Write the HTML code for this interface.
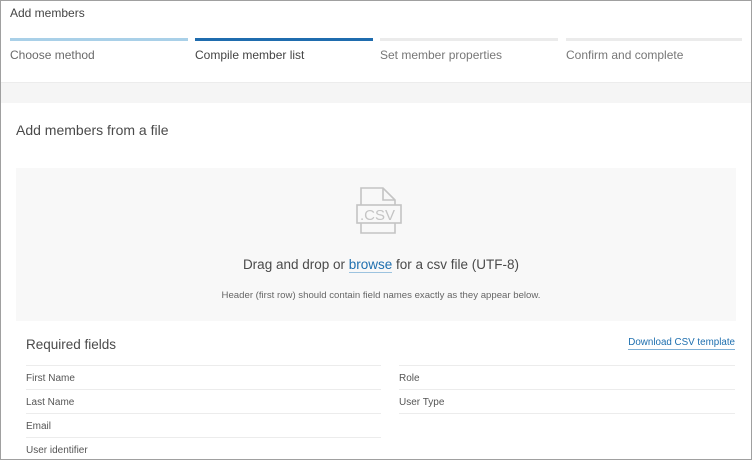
<!DOCTYPE html>
<html><head><style>
body{margin:0;width:752px;height:460px;overflow:hidden;background:#fff;font-family:"Liberation Sans",sans-serif;}
.frame{position:absolute;left:0;top:0;width:750px;height:458px;border:1px solid #a0a0a0;}
.a{position:absolute;white-space:nowrap;}
.bar{position:absolute;top:38px;height:3px;}
.ln{position:absolute;height:1px;background:#ececec;}
.f{position:absolute;font-size:10px;color:#555;}
</style></head><body>
<div class="frame"></div>
<div class="a" style="left:10px;top:6px;font-size:12px;color:#444">Add members</div>
<div class="bar" style="left:10px;width:178px;background:#a9d0e8"></div>
<div class="bar" style="left:195px;width:178px;background:#1f6cae"></div>
<div class="bar" style="left:380px;width:178px;background:#ebebeb"></div>
<div class="bar" style="left:566px;width:176px;background:#ebebeb"></div>
<div class="a" style="left:10px;top:48px;font-size:12px;color:#6a6a6a">Choose method</div>
<div class="a" style="left:195px;top:48px;font-size:12px;color:#444">Compile member list</div>
<div class="a" style="left:380px;top:48px;font-size:12px;color:#777">Set member properties</div>
<div class="a" style="left:566px;top:48px;font-size:12px;color:#777">Confirm and complete</div>
<div class="a" style="left:1px;top:82px;width:750px;height:20px;background:#f5f5f5;border-top:1px solid #ececec"></div>
<div class="a" style="left:16px;top:122px;font-size:14px;color:#4a4a4a">Add members from a file</div>
<div class="a" style="left:16px;top:168px;width:720px;height:153px;background:#f8f8f8"></div>
<svg class="a" style="left:356px;top:186px" width="48" height="50" viewBox="0 0 48 50" fill="none" stroke="#c4c4c4" stroke-width="1.6">
<path d="M5 19V2h22l12 12v5M27 2v12h12M5 37v10h34V37"/>
<rect x="1" y="19" width="44" height="18" fill="#f8f8f8"/>
<text x="4" y="34" font-family="Liberation Sans" font-size="15" fill="#c4c4c4" stroke="none">.CSV</text>
</svg>
<div class="a" style="left:0;width:762px;text-align:center;top:257px;font-size:13.5px;color:#4a4a4a">Drag and drop or <span style="color:#1e6faf;border-bottom:1px solid #9cc3df">browse</span> for a csv file (UTF-8)</div>
<div class="a" style="left:0;width:762px;text-align:center;top:290px;font-size:9.6px;color:#666">Header (first row) should contain field names exactly as they appear below.</div>
<div class="a" style="left:26px;top:337px;font-size:13.5px;color:#4a4a4a">Required fields</div>
<div class="a" style="right:17px;top:337px;font-size:9.8px;color:#1e6faf;border-bottom:1px solid #7fb0d6;padding-bottom:1px">Download CSV template</div>
<div class="ln" style="left:26px;width:355px;top:365px"></div>
<div class="ln" style="left:26px;width:355px;top:389px"></div>
<div class="ln" style="left:26px;width:355px;top:413px"></div>
<div class="ln" style="left:26px;width:355px;top:437px"></div>
<div class="ln" style="left:399px;width:336px;top:365px"></div>
<div class="ln" style="left:399px;width:336px;top:389px"></div>
<div class="ln" style="left:399px;width:336px;top:413px"></div>
<div class="f" style="left:26px;top:373px">First Name</div>
<div class="f" style="left:26px;top:397px">Last Name</div>
<div class="f" style="left:26px;top:421px">Email</div>
<div class="f" style="left:26px;top:445px">User identifier</div>
<div class="f" style="left:399px;top:373px">Role</div>
<div class="f" style="left:399px;top:397px">User Type</div>
</body></html>
